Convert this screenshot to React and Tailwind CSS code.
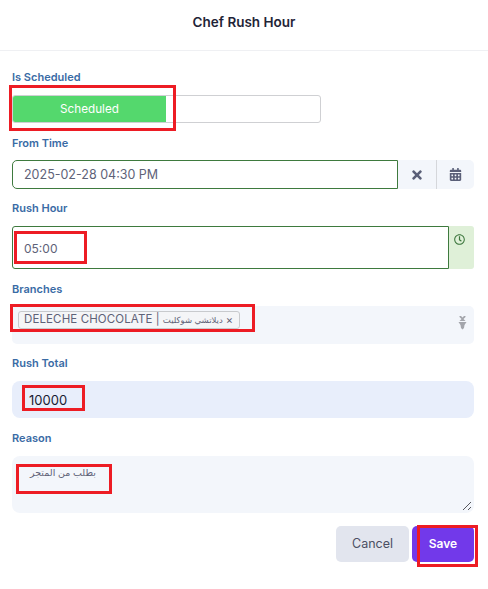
import { FaTimes, FaCalendarAlt, FaRegClock } from 'react-icons/fa';

function Field({ label, className, children }) {
  return (
    <div className={className}>
      <label className="block h-[14px] text-[11px] leading-[14px] font-semibold text-[#3a6ba5]">{label}</label>
      {children}
    </div>
  );
}

// red annotation rectangle drawn over the form in the screenshot
function Mark({ className }) {
  return <div className={`absolute border-[3px] border-[#ed1c24] pointer-events-none ${className}`} />;
}

export default function App() {
  return (
    <div className="relative w-[488px] h-[589px] bg-white overflow-hidden font-['Inter','DejaVu_Sans',sans-serif]">
      <div className="h-[51px] border-b border-[#eff0f3] flex items-center justify-center pb-[5px]">
        <h2 className="text-[13.5px] font-semibold text-[#1f2437]">Chef Rush Hour</h2>
      </div>

      <div className="px-3 pt-[19px]">
        <Field label="Is Scheduled">
          <div className="mt-[11px] w-[309px] h-[28px] border border-[#cfd0d3] rounded-[3px] overflow-hidden bg-white">
            <div className="w-[153px] h-full bg-[#54d86d] flex items-center justify-center pt-[2px] text-[11.7px] text-white">Scheduled</div>
          </div>
        </Field>

        <Field label="From Time" className="mt-[13px]">
          <div className="mt-[10px] flex h-[29px] w-[462px]">
            <div className="w-[386px] border border-[#3e7a3e] rounded-l-[5px] flex items-center pl-[11px] pt-[2px] text-[12.5px] text-[#5e6278]">2025-02-28 04:30 PM</div>
            <div className="flex-1 flex bg-[#f3f6fb] rounded-r-[5px]">
              <div className="w-[39px] flex items-center justify-center border-r border-[#d5d7db] text-[#5a5f78]"><FaTimes size={14} /></div>
              <div className="flex-1 flex items-center justify-center text-[#5a5f78]"><FaCalendarAlt size={13} /></div>
            </div>
          </div>
        </Field>

        <Field label="Rush Hour" className="mt-[12px]">
          <div className="mt-[11px] flex h-[43px] w-[462px]">
            <div className="w-[437px] border border-[#3e7a3e] rounded-l-[3px] flex items-center pl-[11px] pt-[2px] text-[12px] text-[#5e6278]">05:00</div>
            <div className="flex-1 bg-[#dff0d8] rounded-r-[3px] pl-[5px] pt-[8px] text-[#3c763d]"><FaRegClock size={11} /></div>
          </div>
        </Field>

        <Field label="Branches" className="mt-[13px]">
          <div className="mt-[10px] flex h-[38px] w-[462px] bg-[#f3f6fb] rounded-[5px] pl-[6px] pt-[5px]">
            <div className="h-[18px] w-[222px] flex items-center gap-[3px] bg-[#f4f5f7] border border-[#c8cacd] rounded-[3px] pl-[5px] text-[11.5px] tracking-[0.12px] text-[#5e6278] whitespace-nowrap">
              <span>DELECHE CHOCOLATE |</span>
              <span dir="rtl" className="text-[8.5px] tracking-normal">ديلاتشي شوكليت</span>
              <span className="text-[11px] leading-none">×</span>
            </div>
            <svg className="ml-auto mr-[7px] mt-[4px]" width="9" height="15" viewBox="0 0 9 15" fill="#a3a5ab">
              <path d="M1.5 1 L3 1 L4.5 2.5 L6 1 L7.5 1 L7.5 2 L5.5 4 L7.5 6 L1.5 6 L3.5 4 L1.5 2 Z" />
              <path d="M0.5 7 L8.5 7 L6.5 10 L6 13 L4.5 14.5 L3 13 L2.5 10 Z" />
            </svg>
          </div>
        </Field>

        <Field label="Rush Total" className="mt-[12px]">
          <div className="mt-[11px] flex items-center h-[37px] w-[462px] bg-[#e8eefb] rounded-[8px] pl-[17px] pt-[2px] text-[13px] text-[#181c32]">10000</div>
        </Field>

        <Field label="Reason" className="mt-[13px]">
          <div className="relative mt-[11px] h-[57px] w-[462px] bg-[#f3f6fb] rounded-[8px] pl-[18px] pt-[9px]">
            <span className="block w-fit text-[9.5px] leading-[16px] text-[#5e6278]" dir="rtl">بطلب من المتجر</span>
            <svg className="absolute right-[2px] bottom-[2px]" width="10" height="10" viewBox="0 0 10 10" stroke="#55565c" strokeWidth="1" fill="none">
              <path d="M1 9 L9 1 M6 9 L9 6" />
            </svg>
          </div>
        </Field>

        <div className="mt-[13px] flex justify-end gap-[3px] w-[462px]">
          <button className="w-[73px] h-[36px] rounded-[5px] bg-[#e2e5ee] text-[12.5px] text-[#4b4f63]">Cancel</button>
          <button className="w-[62px] h-[36px] rounded-[5px] bg-[#7239ea] text-[12px] font-semibold text-white">Save</button>
        </div>
      </div>

      <Mark className="left-[9px] top-[85px] w-[167px] h-[46px]" />
      <Mark className="left-[14px] top-[231px] w-[73px] h-[33px]" />
      <Mark className="left-[10px] top-[304px] w-[245px] h-[28px]" />
      <Mark className="left-[22px] top-[385px] w-[63px] h-[26px]" />
      <Mark className="left-[16px] top-[464px] w-[96px] h-[30px]" />
      <Mark className="left-[417px] top-[525px] w-[61px] h-[42px]" />
    </div>
  );
}
